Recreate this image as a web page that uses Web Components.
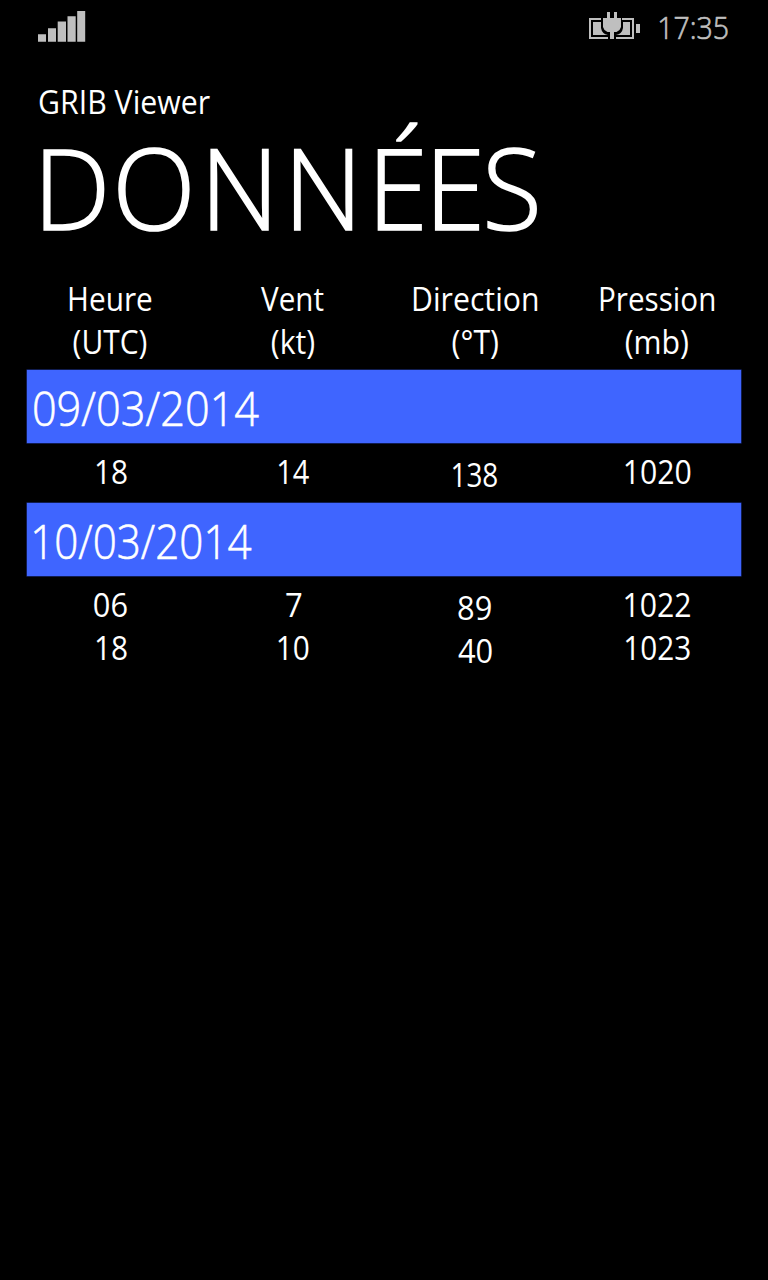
<!DOCTYPE html>
<html lang="fr"><head><meta charset="utf-8"><title>GRIB Viewer</title>
<style>html,body{margin:0;background:#000;color:#fff}body{font-family:"Open Sans","Noto Sans",sans-serif}</style></head>
<body><grib-page></grib-page>
<script>
// Text label whose drawn width is set by the "ink" attribute.
class FitText extends HTMLElement{
 connectedCallback(){
  const s=this.attachShadow({mode:'open'});
  s.innerHTML='<style>:host{display:inline-block;white-space:pre}span{display:inline-block;transform-origin:0 50%}</style><span><slot></slot></span>';
  const t=this.textContent,cs=getComputedStyle(this),c=document.createElement('canvas').getContext('2d');
  c.font=cs.fontWeight+' '+cs.fontSize+' '+cs.fontFamily;
  const m=c.measureText(t),w=m.actualBoundingBoxLeft+m.actualBoundingBoxRight,ink=+this.getAttribute('ink')||w,k=ink/w;
  this.style.width=ink+'px';
  s.querySelector('span').style.transform=`translate(${m.actualBoundingBoxLeft*k+(+this.getAttribute('shift')||0)}px,${+this.getAttribute('drop')||0}px) scaleX(${k})`;
 }
}
class StatusBar extends HTMLElement{
 connectedCallback(){this.attachShadow({mode:'open'}).innerHTML=`<style>
 :host{display:flex;height:77px;box-sizing:border-box;padding:11px 40px 0 38px;color:#bfbfbf;fill:#bfbfbf;align-items:flex-start}
 .signal{margin-right:auto}.clock{font-size:32px;line-height:32px;font-weight:300;margin-left:18px;-webkit-text-stroke:.7px}svg{display:block}</style>
 <svg class="signal" width="48" height="31"><path d="M0 23.3h8v7.4H0zM10 17.2h8v13.5h-8zM19.700 10.5h8.3v20.2h-8.3zM29.5 5.3h8.200v25.4h-8.200zM39.200 0h8v30.7h-8z"/></svg>
 <svg class="battery" width="53" height="31" viewBox="0 0 53 31"><path d="M0 7h12v2H2v17h17v2H0zM33 7h12v21H27v-2h16V9H33zM47 13h4v9h-4zM18 1h3v6h4V1h3v6h4v9l-1.500 3-3 2h-2.500v7h-4v-7h-2.500l-3-2-1.500-3V7h4zM4 11h8v6q1 6 7 7H4zM34 11h7v13H27q6-1 7-7z"/></svg>
 <fit-text class="clock" ink="68">17:35</fit-text>`}
}
class PageTitle extends HTMLElement{
 connectedCallback(){this.attachShadow({mode:'open'}).innerHTML=`<style>
 :host{display:flex;flex-direction:column;height:200px;padding-left:39px}
 .app{font-size:32px;line-height:43px;height:43px;margin-top:3px}.title{font-size:112px;line-height:114px;margin:7px 0 0 5px;font-weight:300;-webkit-text-stroke:1.6px}
 .a{letter-spacing:2px}.o{letter-spacing:4.5px}.b{letter-spacing:5px}.c{letter-spacing:-3px}.d{letter-spacing:-3px}</style>
 <fit-text class="app" ink="171">GRIB Viewer</fit-text><fit-text class="title" ink="482.5"><span class="a">D</span><span class="o">O</span><span class="b">NN</span><span class="c">É</span><span class="d">E</span>S</fit-text>`}
}
class DateBand extends HTMLElement{
 connectedCallback(){this.attachShadow({mode:'open'}).innerHTML=`<style>
 :host{display:block;height:73px;margin:0 27px;padding-left:6px;background:#3f65ff;font-size:48px;line-height:76px;font-weight:300;-webkit-text-stroke:.6px;box-shadow:0 0 0 .5px #2038a0}</style>
 <fit-text ink="${this.getAttribute('ink')}" shift=".7">${this.getAttribute('date')}</fit-text>`}
}
// One line of the table: cells are "text|ink width|shift|drop".
class DataRow extends HTMLElement{
 connectedCallback(){this.attachShadow({mode:'open'}).innerHTML=`<style>
 :host{display:grid;grid-template-columns:repeat(4,182.4px);justify-items:center;margin-left:19px;height:43px;font-size:32px;line-height:43px}</style>`+
 this.getAttribute('cells').split(';').map(x=>{const[a,b,c,d]=x.split('|');return `<fit-text ink="${b}" shift="${c||0}" drop="${d||0}">${a}</fit-text>`}).join('')}
}
class GribPage extends HTMLElement{
 connectedCallback(){this.attachShadow({mode:'open'}).innerHTML=`<style>
 :host{display:flex;flex-direction:column;height:1280px;background:#000;overflow:hidden}
 .d1{margin-top:7px;margin-bottom:7px}.d2{margin-top:10px;margin-bottom:7px}</style>
 <status-bar></status-bar><page-title></page-title>
 <data-row cells="Heure|82|.9;Vent|62.5|.1;Direction|124|.9;Pression|114|.8"></data-row>
 <data-row cells="(UTC)|73.5|.5;(kt)|43|.7;(°T)|46|.5;(mb)|63|-.4"></data-row>
 <date-band class="d1" date="09/03/2014" ink="225"></date-band>
 <data-row cells="18|31|.8;14|31|1;138|45|.2|3;1020|66|.6"></data-row>
 <date-band class="d2" date="10/03/2014" ink="217.500"></date-band>
 <data-row cells="06|33|-.2;7|15.5|.9;89|33|0|3;1022|66|.4"></data-row>
 <data-row cells="18|31|.8;10|31|.7;40|34|0|3;1023|65|0"></data-row>`}
}
customElements.define('fit-text',FitText);customElements.define('status-bar',StatusBar);customElements.define('page-title',PageTitle);customElements.define('date-band',DateBand);customElements.define('data-row',DataRow);customElements.define('grib-page',GribPage);
</script></body></html>
